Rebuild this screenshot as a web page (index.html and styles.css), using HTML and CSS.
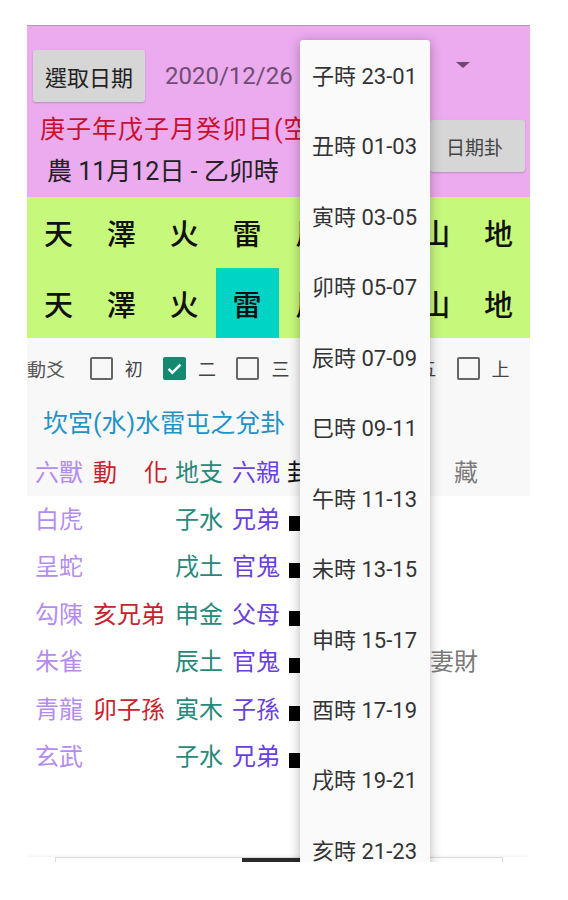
FILE: index.html
```html
<!DOCTYPE html>
<html>
    <head>
        <meta charset="utf-8">
        <link rel="stylesheet" href="styles.css">
    </head>
    <body>
        <div id="app">
            <div id="header">
                <div class="date-row">
                    <button class="btn btn-pick">選取日期</button>
                    <span class="date">2020/12/26</span>
                    <span class="spinner-arrow"></span>
                </div>
                <div class="info-row">
                    <div class="info-text">
                        <div class="ganzhi">庚子年戊子月癸卯日(空亡辰巳)</div>
                        <div class="lunar">農 11月12日 - 乙卯時</div>
                    </div>
                    <button class="btn btn-gua">日期卦</button>
                </div>
            </div>
            <div id="trigrams">
                <div>天</div><div>澤</div><div>火</div><div>雷</div><div>風</div><div>水</div><div>山</div><div>地</div>
                <div>天</div><div>澤</div><div>火</div><div class="hl">雷</div><div>風</div><div>水</div><div>山</div><div>地</div>
            </div>
            <div id="panel">
                <div class="yao-row">
                    <span class="yao-label">動爻</span>
                    <label class="opt"><span class="box"></span><span class="opt-label">初</span></label>
                    <label class="opt"><span class="box checked"><svg viewBox="0 0 24 24" width="19" height="19"><path d="M4.5 12.5l4.8 4.8L19.5 7" fill="none" stroke="#fff" stroke-width="3"/></svg></span><span class="opt-label">二</span></label>
                    <label class="opt"><span class="box"></span><span class="opt-label">三</span></label>
                    <label class="opt"><span class="box"></span><span class="opt-label">四</span></label>
                    <label class="opt"><span class="box"></span><span class="opt-label">五</span></label>
                    <label class="opt"><span class="box"></span><span class="opt-label">上</span></label>
                </div>
                <div class="gua-title">坎宮(水)水雷屯之兌卦</div>
                <div class="grid-row">
                    <span class="beast">六獸</span>
                    <span class="move">動<span class="change">化</span></span>
                    <span class="branch">地支</span>
                    <span class="rel">六親</span>
                    <span class="gua">卦象</span>
                    <span class="hide-col">藏</span>
                </div>
            </div>
            <div id="table">
                <div class="grid-row">
                    <span class="beast">白虎</span><span class="move"></span><span class="branch">子水</span><span class="rel">兄弟</span><span class="gua"><i class="bar"></i></span><span class="hide-col"></span>
                </div>
                <div class="grid-row">
                    <span class="beast">呈蛇</span><span class="move"></span><span class="branch">戌土</span><span class="rel">官鬼</span><span class="gua"><i class="bar"></i></span><span class="hide-col"></span>
                </div>
                <div class="grid-row">
                    <span class="beast">勾陳</span><span class="move">亥兄弟</span><span class="branch">申金</span><span class="rel">父母</span><span class="gua"><i class="bar"></i></span><span class="hide-col"></span>
                </div>
                <div class="grid-row">
                    <span class="beast">朱雀</span><span class="move"></span><span class="branch">辰土</span><span class="rel">官鬼</span><span class="gua"><i class="bar"></i></span><span class="hide-col">妻財</span>
                </div>
                <div class="grid-row">
                    <span class="beast">青龍</span><span class="move">卯子孫</span><span class="branch">寅木</span><span class="rel">子孫</span><span class="gua"><i class="bar"></i></span><span class="hide-col"></span>
                </div>
                <div class="grid-row">
                    <span class="beast">玄武</span><span class="move"></span><span class="branch">子水</span><span class="rel">兄弟</span><span class="gua"><i class="bar"></i></span><span class="hide-col"></span>
                </div>
            </div>
            <div class="bottom">
                <div class="bottom-card"><div class="handle"></div></div>
            </div>
            <ul class="dropdown">
                <li>子時 23-01</li>
                <li>丑時 01-03</li>
                <li>寅時 03-05</li>
                <li>卯時 05-07</li>
                <li>辰時 07-09</li>
                <li>巳時 09-11</li>
                <li>午時 11-13</li>
                <li>未時 13-15</li>
                <li>申時 15-17</li>
                <li>酉時 17-19</li>
                <li>戌時 19-21</li>
                <li>亥時 21-23</li>
            </ul>
        </div>
    </body>
</html>
```

FILE: styles.css
```css
:root {
    --pink: #ecaaef;
    --green: #c6f87c;
    --turquoise: #00d4c4;
    --teal: #14896f;
}
* {
    box-sizing: border-box;
}
body {
    margin: 0;
    background: #fff;
    font-family: Roboto, "Noto Sans CJK TC", sans-serif;
}
#app {
    position: relative;
    width: 503px;
    height: 837px;
    margin: 25px 0 0 27px;
    border-top: 1px solid #ab9bad;
    overflow: hidden;
    background: #fff;
}
#header {
    background: var(--pink);
    height: 171px;
}
.date-row {
    display: flex;
    align-items: center;
    height: 76px;
    padding: 24px 0 0 6px;
}
.btn {
    border: none;
    border-radius: 3px;
    padding: 0;
    background: #d6d6d6;
    color: #222;
    font-family: inherit;
    box-shadow: 0 1px 2px rgba(0,0,0,.2);
}
.btn-pick {
    width: 112px;
    height: 52px;
    font-size: 22px;
}
.date {
    margin-left: 20px;
    font-size: 24px;
    color: #6e4e72;
}
.spinner-arrow {
    align-self: flex-start;
    margin: 12px 60px 0 auto;
    border-left: 7px solid transparent;
    border-right: 7px solid transparent;
    border-top: 6px solid #6b4a6d;
}
.info-row {
    display: flex;
    margin-top: 11px;
}
.info-text {
    flex: 1;
    overflow: hidden;
    padding-left: 13px;
}
.ganzhi {
    font-size: 25px;
    letter-spacing: 1px;
    line-height: 34px;
    color: #c8102e;
    white-space: nowrap;
}
.lunar {
    margin-top: 8px;
    padding-left: 7px;
    font-size: 25px;
    line-height: 34px;
    color: #222;
    white-space: nowrap;
}
.btn-gua {
    width: 95px;
    height: 52px;
    margin: 7px 5px 0 0;
    padding-right: 6px;
    font-size: 19px;
    color: #444;
}
#trigrams {
    display: grid;
    grid-template-columns: repeat(8, 1fr);
    grid-auto-rows: 70.5px;
    background: var(--green);
}
#trigrams > div {
    display: flex;
    align-items: center;
    justify-content: center;
    font-size: 29px;
    font-weight: 500;
    color: #111;
}
#trigrams > .hl {
    background: var(--turquoise);
}
#panel {
    background: #f8f8f8;
}
.yao-row {
    display: flex;
    align-items: center;
    height: 60px;
}
.yao-label {
    width: 64px;
    font-size: 19px;
    color: #555;
}
.opt {
    display: flex;
    align-items: center;
    width: 75px;
}
.box {
    display: flex;
    align-items: center;
    justify-content: center;
    width: 23px;
    height: 23px;
    margin-right: 12px;
    border: 2px solid #666;
    border-radius: 2px;
}
.box.checked {
    background: var(--teal);
    border-color: var(--teal);
}
.opt-label {
    font-size: 18px;
    color: #444;
}
.gua-title {
    height: 51px;
    line-height: 51px;
    padding-left: 16px;
    font-size: 25px;
    color: #1e94c8;
}
.grid-row {
    display: grid;
    grid-template-columns: 58px 82px 57px 55px 1fr auto;
    align-items: center;
    height: 47.4px;
    padding: 0 52px 0 8px;
    font-size: 24px;
    line-height: 30px;
    white-space: nowrap;
}
.beast {
    color: #b48cf0;
}
.move {
    color: #c8222c;
}
.change {
    margin-left: 27px;
}
.branch {
    color: #27897a;
}
.rel {
    color: #6a3fe0;
}
.gua {
    color: #111;
}
.hide-col {
    color: #7a7a7a;
}
.bar {
    display: block;
    width: 60px;
    height: 15px;
    margin: 7px 0 0 2px;
    background: #000;
}
.bottom {
    margin-top: 76px;
    padding: 0 27px 0 28px;
    box-shadow: 0 -1px 3px rgba(0,0,0,.06);
}
.bottom-card {
    height: 20px;
    border: 1px solid #dcdcdc;
    border-bottom: none;
}
.handle {
    width: 58px;
    height: 4px;
    margin-left: 186px;
    background: #2b2b2b;
}
.dropdown {
    position: absolute;
    top: 14px;
    left: 273px;
    width: 130px;
    margin: 0;
    padding: 2px 0 0 0;
    list-style: none;
    background: #fafafa;
    border-radius: 3px;
    box-shadow: 0 2px 12px rgba(0,0,0,.3);
}
.dropdown li {
    height: 70.45px;
    line-height: 70.45px;
    padding-left: 12px;
    font-size: 22px;
    color: #333;
    white-space: nowrap;
}
```
